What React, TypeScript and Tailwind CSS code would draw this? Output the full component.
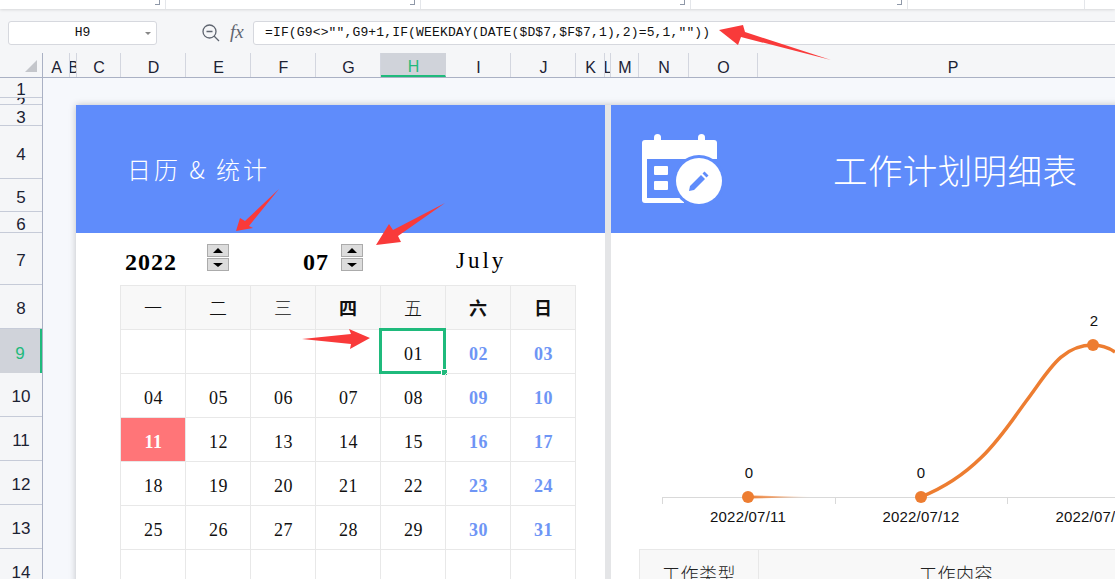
const columns = [
  { label: "A", width: "w-[27px]" },
  { label: "B", width: "w-[7px]" },
  { label: "C", width: "w-[44px]" },
  { label: "D", width: "w-[65px]" },
  { label: "E", width: "w-[65px]" },
  { label: "F", width: "w-[65px]" },
  { label: "G", width: "w-[65px]" },
  { label: "H", width: "w-[65px]", active: true },
  { label: "I", width: "w-[65px]" },
  { label: "J", width: "w-[65px]" },
  { label: "K", width: "w-[29px]" },
  { label: "L", width: "w-[6px]" },
  { label: "M", width: "w-[28px]" },
  { label: "N", width: "w-[50px]" },
  { label: "O", width: "w-[69px]" },
  { label: "P", width: "w-[390px]" },
];

const rows = [
  { label: "1", height: "h-[20px]" },
  { label: "2", height: "h-[7px]" },
  { label: "3", height: "h-[21px]" },
  { label: "4", height: "h-[53px]" },
  { label: "5", height: "h-[33px]" },
  { label: "6", height: "h-[21px]" },
  { label: "7", height: "h-[52px]" },
  { label: "8", height: "h-[44px]" },
  { label: "9", height: "h-[44px]", active: true },
  { label: "10", height: "h-[44px]" },
  { label: "11", height: "h-[44px]" },
  { label: "12", height: "h-[44px]" },
  { label: "13", height: "h-[44px]" },
  { label: "14", height: "h-[44px]" },
];

const ribbonMarks = [
  { width: "w-[166px]" },
  { width: "w-[255px]" },
  { width: "w-[270px]" },
  { width: "w-[217px]" },
  { width: "w-[177px]", noCorner: true },
];

const weekdays = [
  { text: "一", bold: false },
  { text: "二", bold: false },
  { text: "三", bold: false },
  { text: "四", bold: true },
  { text: "五", bold: false },
  { text: "六", bold: true },
  { text: "日", bold: true },
];

const weeks = [
  ["", "", "", "", "01", "02", "03"],
  ["04", "05", "06", "07", "08", "09", "10"],
  ["11", "12", "13", "14", "15", "16", "17"],
  ["18", "19", "20", "21", "22", "23", "24"],
  ["25", "26", "27", "28", "29", "30", "31"],
  ["", "", "", "", "", "", ""],
];

function Spinner() {
  return (
    <div className="flex flex-col gap-[1px]">
      <div className="w-[22px] h-[13px] bg-[#dcdcdc] border border-[#ababab] flex items-center justify-center">
        <div className="w-0 h-0 border-x-[5px] border-x-transparent border-b-[5px] border-b-black" />
      </div>
      <div className="w-[22px] h-[13px] bg-[#dcdcdc] border border-[#ababab] flex items-center justify-center">
        <div className="w-0 h-0 border-x-[5px] border-x-transparent border-t-[4px] border-t-black" />
      </div>
    </div>
  );
}

function CalendarIcon() {
  return (
    <svg width="84" height="72" viewBox="0 0 84 72" className="shrink-0">
      <rect x="14" y="1" width="7" height="12" rx="3.5" fill="#fff" />
      <rect x="58" y="1" width="7" height="12" rx="3.5" fill="#fff" />
      <path d="M5 7h69a3 3 0 0 1 3 3v60H5a3 3 0 0 1-3-3V10a3 3 0 0 1 3-3z" fill="#fff" />
      <rect x="7" y="26" width="77" height="39" fill="#5f8cfb" />
      <rect x="44" y="65" width="40" height="7" fill="#5f8cfb" />
      <rect x="14" y="33" width="14" height="9" rx="1" fill="#fff" />
      <rect x="14" y="48" width="14" height="9" rx="1" fill="#fff" />
      <circle cx="59" cy="48" r="26" fill="#5f8cfb" />
      <circle cx="59" cy="48" r="23" fill="#fff" />
      <path
        d="M49 58l1-5L61 42l4 4L54 57zM62.500 40.500l2-2 4 4-2 2z"
        fill="#5f8cfb"
      />
    </svg>
  );
}

function Chart() {
  return (
    <svg width="504" height="316" className="block" fontFamily="'Liberation Sans', sans-serif">
      <defs>
        <linearGradient id="fade" x1="0" x2="1" y1="0" y2="0">
          <stop offset="0" stopColor="#ed7d31" />
          <stop offset="1" stopColor="#ed7d31" stopOpacity="0" />
        </linearGradient>
      </defs>
      <path d="M51 264.5H504M51.5 264V271M224.500 264V271M396.500 264V271" stroke="#d9d9d9" fill="none" />
      <polygon points="137,262.500 202,264 137,265.500" fill="url(#fade)" />
      <path
        d="M310 264C370 240 395 195 416 167S450 112 482 112C490 112 498 115 504 119"
        stroke="#ed7d31"
        strokeWidth="3.5"
        fill="none"
      />
      <circle cx="137" cy="264" r="6" fill="#ed7d31" />
      <circle cx="310" cy="264" r="6" fill="#ed7d31" />
      <circle cx="482" cy="112" r="6" fill="#ed7d31" />
      <text x="138" y="245" textAnchor="middle" fontSize="15" fill="#111">0</text>
      <text x="310" y="245" textAnchor="middle" fontSize="15" fill="#111">0</text>
      <text x="483" y="93" textAnchor="middle" fontSize="15" fill="#111">2</text>
      <text x="137" y="289" textAnchor="middle" fontSize="15" letterSpacing="0.2" fill="#111">2022/07/11</text>
      <text x="310" y="289" textAnchor="middle" fontSize="15" letterSpacing="0.2" fill="#111">2022/07/12</text>
      <text x="483" y="289" textAnchor="middle" fontSize="15" letterSpacing="0.2" fill="#111">2022/07/13</text>
    </svg>
  );
}

export default function App() {
  return (
    <div className="relative w-[1115px] h-[579px] overflow-hidden flex flex-col bg-[#f5f6f8] text-[#1c2233] font-['Liberation_Sans',sans-serif]">
      {/* ribbon bottom edge */}
      <div className="h-[9px] shrink-0 bg-white shadow-[0_1px_3px_rgba(0,0,0,0.12)] flex">
        {ribbonMarks.map((m, i) => (
          <div key={i} className={`${m.width} shrink-0 h-full border-r border-[#e4e6ea] relative`}>
            {!m.noCorner && (
              <div className="absolute right-[5px] top-0 w-[5px] h-[5px] border-r border-b border-[#8f98a8]" />
            )}
          </div>
        ))}
      </div>

      {/* formula bar */}
      <div className="h-[44px] shrink-0 flex items-center pl-[8px] pt-[3px]">
        <div className="relative w-[149px] h-[24px] bg-white border border-[#d6d8de] rounded-[3px] flex items-center justify-center pt-[1px] font-['Liberation_Mono',monospace] text-[13px] text-[#111]">
          H9
          <div className="absolute right-[5px] top-[10px] w-0 h-0 border-x-[3px] border-x-transparent border-t-[3px] border-t-[#888]" />
        </div>
        <svg width="18" height="18" viewBox="0 0 18 18" className="ml-[45px]" fill="none" stroke="#5f6570" strokeWidth="1.3">
          <circle cx="7.5" cy="7.5" r="6.5" />
          <path d="M4.5 7.5h6M12 12l5 5" />
        </svg>
        <span className="ml-[10px] w-[23px] font-['Liberation_Serif',serif] italic text-[19px] text-[#5f6570]">fx</span>
        <div className="h-[24px] flex-1 -mr-[4px] bg-white border border-[#d6d8de] rounded-[3px] flex items-center pl-[11px] font-['Liberation_Mono',monospace] text-[13px] tracking-[0.15px] text-[#111] whitespace-pre">
          =IF(G9&lt;&gt;"",G9+1,IF(WEEKDAY(DATE($D$7,$F$7,1),2)=5,1,""))
        </div>
      </div>

      {/* column headers */}
      <div className="h-[25px] shrink-0 flex border-b border-[#aab1c4]">
        <div className="w-[43px] shrink-0 relative border-r border-[#aab1c4]">
          <div className="absolute left-[25px] top-[7px] w-0 h-0 border-l-[12px] border-l-transparent border-b-[12px] border-b-[#c4c6cb]" />
        </div>
        {columns.map((c) => (
          <div
            key={c.label}
            className={`${c.width} shrink-0 overflow-hidden flex items-center justify-center pt-[5px] pl-[1px] text-[16px] border-r ${
              c.active
                ? "bg-[#d0d3da] text-[#1fba7c] border-b-2 border-b-[#1fba7c] border-r-transparent"
                : "border-[#d3d6df]"
            }`}
          >
            {c.label}
          </div>
        ))}
      </div>

      <div className="flex-1 min-h-0 flex">
        {/* row headers */}
        <div className="w-[43px] shrink-0 border-r border-[#aab1c4]">
          {rows.map((r) => (
            <div
              key={r.label}
              className={`${r.height} overflow-hidden flex items-center justify-center pt-[5px] text-[17px] ${
                r.active
                  ? "bg-[#d0d3da] text-[#1fba7c] border-r-2 border-r-[#1fba7c]"
                  : "border-b border-[#c6cbd8]"
              }`}
            >
              {r.label}
            </div>
          ))}
        </div>

        {/* sheet */}
        <div className="flex-1 min-w-0 bg-[#f6f8fc] pl-[33px] pt-[27px]">
          <div className="flex gap-[6px] h-[600px] w-[1100px] bg-[#e4e5e7] shadow-[0_0_7px_rgba(0,0,0,0.22)]">
            {/* calendar panel */}
            <div className="w-[529px] shrink-0 bg-white">
              <div className="h-[128px] bg-[#5f8cfb] flex items-center pl-[51px] text-white text-[24px] tracking-[3px] font-['Noto_Sans_CJK_SC',sans-serif] font-light">
                日历&nbsp;&amp;&nbsp;统计
              </div>
              <div className="pl-[44px]">
                <div className="h-[52px] flex items-center pt-[5px] font-['Liberation_Serif','Noto_Sans_CJK_SC',serif] text-black">
                  <span className="ml-[5px] w-[82px] text-[24px] font-bold tracking-[1px]">2022</span>
                  <div className="-mt-[8px]">
                    <Spinner />
                  </div>
                  <span className="ml-[74px] w-[38px] text-[24px] font-bold tracking-[1px]">07</span>
                  <div className="-mt-[8px]">
                    <Spinner />
                  </div>
                  <span className="ml-[93px] text-[23px] tracking-[3px] font-light">July</span>
                </div>
                <div className="w-[456px] border-l border-t border-[#e8e8e8] grid grid-cols-[repeat(7,65px)] grid-rows-[repeat(7,44px)] font-['Liberation_Serif','Noto_Sans_CJK_SC',serif] text-[18px] text-[#111]">
                  {weekdays.map((d) => (
                    <div
                      key={d.text}
                      className={`bg-[#f8f8f8] border-r border-b border-[#e8e8e8] flex items-center justify-center pt-[4px] ${
                        d.bold ? "font-bold" : "font-light"
                      }`}
                    >
                      {d.text}
                    </div>
                  ))}
                  {weeks.map((week, w) =>
                    week.map((day, i) => {
                      const today = day === "11";
                      const selected = day === "01";
                      const weekend = i >= 5 && day !== "";
                      return (
                        <div
                          key={`${w}-${i}`}
                          className={`relative border-r border-b border-[#e8e8e8] flex items-center justify-center pt-[5px] pl-[1px] tracking-[0.5px] ${
                            today ? "bg-[#ff7578] text-white font-bold" : ""
                          } ${weekend ? "text-[#6e95f5] font-bold" : ""}`}
                        >
                          {day}
                          {selected && (
                            <>
                              <div className="absolute -left-[2px] -top-[2px] w-[67px] h-[46px] border-[3px] border-[#1fba7c]" />
                              <div className="absolute -right-[3px] -bottom-[3px] w-[5px] h-[5px] bg-[#1fba7c] border border-white box-content" />
                            </>
                          )}
                        </div>
                      );
                    })
                  )}
                </div>
              </div>
            </div>

            {/* plan panel */}
            <div className="flex-1 min-w-0 bg-white">
              <div className="h-[128px] bg-[#5f8cfb] flex items-center pl-[29px] text-white">
                <CalendarIcon />
                <span className="ml-[109px] mt-[1px] text-[34.5px] tracking-[0.4px] font-['Noto_Sans_CJK_SC',sans-serif] font-light whitespace-nowrap">
                  工作计划明细表
                </span>
              </div>
              <Chart />
              <div className="ml-[28px] flex h-[40px] border-t border-l border-[#e8e8e8] bg-[#f8f8f8] text-[18px] tracking-[0.5px] font-['Noto_Sans_CJK_SC',sans-serif] font-light text-[#222]">
                <div className="w-[119px] shrink-0 border-r border-[#e8e8e8] pt-[10px] text-center">工作类型</div>
                <div className="w-[394px] shrink-0 pt-[10px] text-center">工作内容</div>
              </div>
            </div>
          </div>
        </div>
      </div>

      {/* annotation arrows */}
      <svg width="1115" height="579" className="absolute inset-0 pointer-events-none" fill="#f93a3a">
        <polygon points="719,30 743,25 745,32 831,60 741,37 738,45" />
        <polygon points="236,231 240,218 245,221 279,189 249,226 253,228" />
        <polygon points="376,245 389,224 393,230 445,203 398,236 401,242" />
        <polygon points="302,339 351,334 349,329 370,338 350,349 351,344" />
      </svg>
    </div>
  );
}
